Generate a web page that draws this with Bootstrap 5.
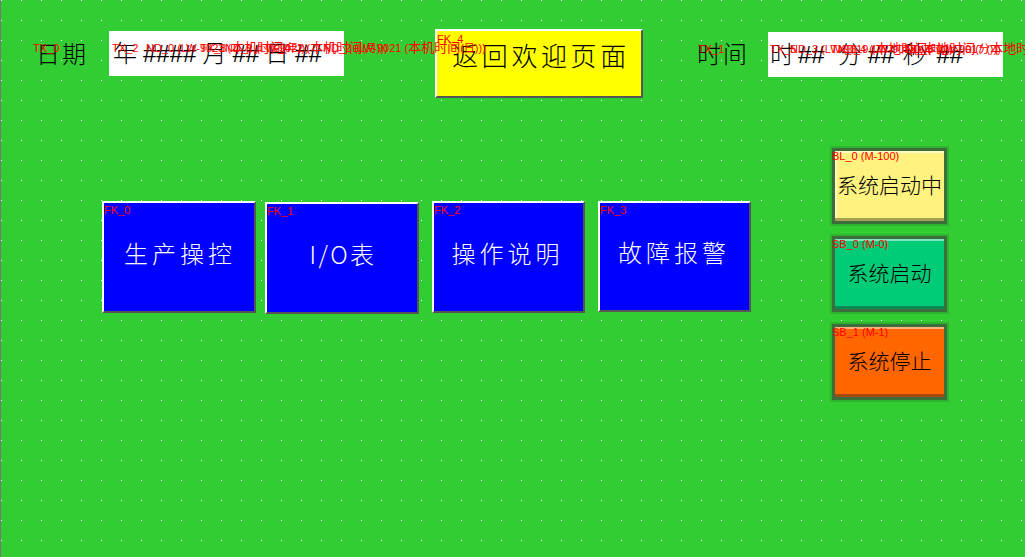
<!DOCTYPE html>
<html lang="zh-CN">
<head>
<meta charset="utf-8">
<title>欢迎页面</title>
<link href="https://cdn.jsdelivr.net/npm/bootstrap@5.3.0/dist/css/bootstrap.min.css" rel="stylesheet">
<style>
html,body{margin:0;height:100%;overflow:hidden;background:#32cd32}
.hmi-canvas{position:relative;width:1025px;height:557px;overflow:hidden;background-color:#fff;
 background-image:linear-gradient(to bottom,#32cd32 19px,transparent 19px),linear-gradient(to right,#32cd32 19px,transparent 19px);background-size:20px 20px;background-position:1px 1px;
 border-left:1px solid #777;font-family:"Noto Sans CJK SC","Liberation Sans",sans-serif;font-weight:300;color:#000}
.hmi-top{height:119px;padding-top:29px}
.hmi-mid{align-items:flex-start}
.hmi-tag{position:absolute;z-index:5;font:11px/12px "Liberation Sans","Noto Sans CJK SC",sans-serif;color:#f00;white-space:nowrap;letter-spacing:0}
.hmi-cn{font-size:13px}
.hmi-tl{left:0;top:1px}
.hmi-t4{top:2px}
.hmi-ll{left:-3px;top:-1px}
.hmi-cap{position:relative;font-size:24px;line-height:30px;letter-spacing:2px;white-space:nowrap}
.hmi-date{margin:9px 0 0 35px;width:73px}
.hmi-date .hmi-tag{left:-3px;top:4px}
.hmi-time{margin:9px 0 0 54px;width:71px}
.hmi-time .hmi-tag{left:1px;top:5px}
.hmi-box{position:relative;width:235px;height:45px;background:#fff;font:24px/30px "Liberation Sans","Noto Sans CJK SC",sans-serif;padding-top:8px;white-space:nowrap;font-weight:300}
.hmi-box .hmi-tag{top:11px}
.hmi-box-d{margin:2px 91px 0 0;padding-left:4px}
.hmi-box-t{margin:3px 0 0 0;padding-left:2px}
.hmi-row-d{gap:6px}
.hmi-row-t span:nth-child(1){margin-right:4px}
.hmi-row-t span:nth-child(2){margin-right:13px}
.hmi-row-t span:nth-child(3){margin-right:6px}
.hmi-row-t span:nth-child(4){margin-right:8px}
.hmi-row-t span:nth-child(5){margin-right:10px}
.hmi-box .hmi-a{left:3px}.hmi-box .hmi-b{left:37px}.hmi-box .hmi-c{left:91px}.hmi-box .hmi-d{left:116px}.hmi-box .hmi-e{left:155px}.hmi-box .hmi-f{left:214px}
.hmi-box .hmi-g1{left:2px}.hmi-box .hmi-g2{left:22px}.hmi-box .hmi-g3{left:63px}.hmi-box .hmi-g4{left:70px}.hmi-box .hmi-g5{left:135px}.hmi-box .hmi-g6{left:137px}
.hmi-key{position:relative;box-sizing:border-box;display:flex;align-items:center;justify-content:center;border:2px solid;border-color:#fff #555 #555 #fff;white-space:nowrap;font-weight:300}
.hmi-home{width:208px;height:69px;background:#ff0;font-size:26px;letter-spacing:3.6px;padding:0 0 18px 4px}
.hmi-blue{height:112px;background:#00f;color:#fff;font-size:24px;letter-spacing:4px;padding:0 0 9px 2px}
.hmi-k0{width:154px;margin:82px 9px 0 101px}
.hmi-k1{width:154px;margin:83px 13px 0 0;letter-spacing:2.5px}
.hmi-k2{width:153px;margin:82px 13px 0 0;padding:0 2px 9px 0}
.hmi-k3{width:153px;margin:82px 0 0 0;height:111px;padding:0 1px 9px 0}
.hmi-side{margin:29px 0 0 81px;gap:12px;width:115px}
.hmi-lamp{position:relative;box-sizing:border-box;width:115px;height:76px;border:3px solid #3c6e3c;outline:2px solid #2fb42f;display:flex;align-items:center;justify-content:center;font-size:21px;line-height:1;padding-bottom:4px}
.hmi-y{background:#fff27f;box-shadow:inset 0 -3px 0 #a89e55,inset 2px 2px 0 #fffbc0}
.hmi-gr{background:#00cc77;box-shadow:inset 0 2px 0 #7de8bf,inset 0 -3px 0 #0a8a55}
.hmi-o{background:#ff6600;box-shadow:inset 0 2px 0 #ffb07d,inset 0 -3px 0 #a84a0a}
</style>
</head>
<body>
<main class="hmi-canvas">
 <div class="hmi-top d-flex align-items-start">
  <div class="hmi-cap hmi-date">日期<span class="hmi-tag">TX_0</span></div>
  <div class="hmi-box hmi-box-d">
   <div class="hmi-row-d d-flex"><span>年</span><span>####</span><span>月</span><span>##</span><span>日</span><span>##</span></div>
   <span class="hmi-tag hmi-a">TX_2</span>
   <span class="hmi-tag hmi-b">ND_0 (LW-9023 (<span class="hmi-cn">本机时间</span>(年)))</span>
   <span class="hmi-tag hmi-c">TX_3</span>
   <span class="hmi-tag hmi-d">ND_1 (LW-9022 (<span class="hmi-cn">本机时间</span>(月)))</span>
   <span class="hmi-tag hmi-e">TX_4</span>
   <span class="hmi-tag hmi-f">ND_2 (LW-9021 (<span class="hmi-cn">本机时间</span>(日)))</span>
  </div>
  <button type="button" class="hmi-key hmi-home">返回欢迎页面<span class="hmi-tag hmi-tl hmi-t4">FK_4</span></button>
  <div class="hmi-cap hmi-time">时间<span class="hmi-tag">TX_1</span></div>
  <div class="hmi-box hmi-box-t">
   <div class="hmi-row-t d-flex"><span>时</span><span>##</span><span>分</span><span>##</span><span>秒</span><span>##</span></div>
   <span class="hmi-tag hmi-g1">TX_5</span>
   <span class="hmi-tag hmi-g2">ND_3 (LW-9019 (<span class="hmi-cn">本地时间</span>(时)))</span>
   <span class="hmi-tag hmi-g3">TX_6</span>
   <span class="hmi-tag hmi-g4">ND_4 (LW-9018 (<span class="hmi-cn">本地时间</span>(分)))</span>
   <span class="hmi-tag hmi-g5">TX_7</span>
   <span class="hmi-tag hmi-g6">ND_5 (LW-9017 (<span class="hmi-cn">本地时间</span>(秒)))</span>
  </div>
 </div>
 <div class="hmi-mid d-flex">
  <button type="button" class="hmi-key hmi-blue hmi-k0">生产操控<span class="hmi-tag hmi-tl">FK_0</span></button>
  <button type="button" class="hmi-key hmi-blue hmi-k1">I/O表<span class="hmi-tag hmi-tl">FK_1</span></button>
  <button type="button" class="hmi-key hmi-blue hmi-k2">操作说明<span class="hmi-tag hmi-tl">FK_2</span></button>
  <button type="button" class="hmi-key hmi-blue hmi-k3">故障报警<span class="hmi-tag hmi-tl">FK_3</span></button>
  <div class="hmi-side d-flex flex-column">
   <div class="hmi-lamp hmi-y">系统启动中<span class="hmi-tag hmi-ll">BL_0 (M-100)</span></div>
   <div class="hmi-lamp hmi-gr">系统启动<span class="hmi-tag hmi-ll">SB_0 (M-0)</span></div>
   <div class="hmi-lamp hmi-o">系统停止<span class="hmi-tag hmi-ll">SB_1 (M-1)</span></div>
  </div>
 </div>
</main>
<script src="https://cdn.jsdelivr.net/npm/bootstrap@5.3.0/dist/js/bootstrap.bundle.min.js"></script>
</body>
</html>
